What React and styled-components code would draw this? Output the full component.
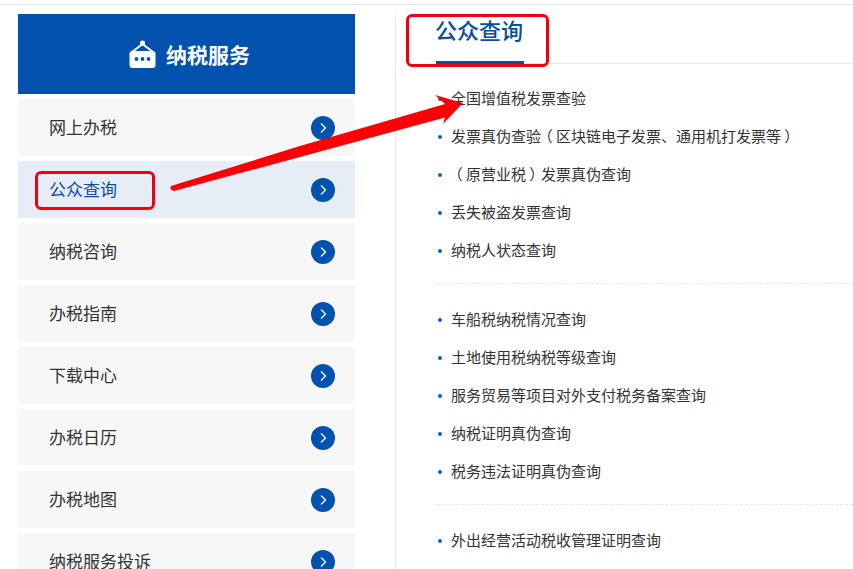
import React from "react";
import styled, { createGlobalStyle } from "styled-components";

const SIDE_ITEMS = ["网上办税", "公众查询", "纳税咨询", "办税指南", "下载中心", "办税日历", "办税地图", "纳税服务投诉"];

const GROUPS = [
  ["全国增值税发票查验", "发票真伪查验（区块链电子发票、通用机打发票等）", "（原营业税）发票真伪查询", "丢失被盗发票查询", "纳税人状态查询"],
  ["车船税纳税情况查询", "土地使用税纳税等级查询", "服务贸易等项目对外支付税务备案查询", "纳税证明真伪查询", "税务违法证明真伪查询"],
  ["外出经营活动税收管理证明查询"],
];

const Global = createGlobalStyle`
  html, body { margin: 0; padding: 0; background: #fff; }
  body { font-family: "Noto Sans CJK SC", "Liberation Sans", sans-serif; }
  ul { list-style: none; margin: 0; padding: 0; }
`;

const Page = styled.div`
  position: relative;
  width: 853px;
  height: 565px;
  margin-top: 4px;
  overflow: hidden;
  border-top: 1px solid #dcdfe3;
  padding: 9px 0 0 18px;
  box-sizing: border-box;
  display: flex;
  align-items: stretch;
`;

const Sidebar = styled.aside`
  width: 337px;
  flex: none;
`;

const SideHead = styled.div`
  height: 80px;
  background: #0151ae;
  display: flex;
  align-items: center;
  justify-content: center;
  gap: 10px;
  padding-left: 6px;
  color: #fff;
  font-size: 21px;
  font-weight: 700;
  margin-bottom: 5px;
`;

const SideRow = styled.div`
  height: 57px;
  margin-bottom: 5px;
  background: ${({ $active }) => ($active ? "#e6edf7" : "#f7f7f8")};
  color: ${({ $active }) => ($active ? "#0b4c9e" : "#333")};
  font-size: 17px;
  display: flex;
  align-items: center;
  justify-content: space-between;
  padding: 0 20px 0 31px;
`;

const SideLabel = styled.span`
  position: relative;
  top: -1px;
`;

const Arrow = styled.span`
  width: 24px;
  height: 24px;
  border-radius: 50%;
  background: #0151ae;
  display: flex;
  align-items: center;
  justify-content: center;
`;

const Main = styled.main`
  margin-left: 40px;
  flex: 1;
  border-left: 1px solid #e2e4e8;
  padding-left: 40px;
  min-width: 0;
`;

const TabBar = styled.div`
  height: 49px;
  border-bottom: 1px solid #e4e6e9;
  margin-bottom: 15px;
`;

const Tab = styled.div`
  width: 88px;
  height: 47px;
  border-bottom: 3px solid #0b4ea6;
  color: #0b4c9e;
  font-size: 22px;
  font-weight: 500;
  line-height: 30px;
  white-space: nowrap;
  text-indent: -1px;
`;

const Group = styled.ul`
  padding-bottom: 14px;
  margin-bottom: 16px;
  border-bottom: 1px dashed #e6e6e6;
  &:last-child { border-bottom: 0; }
`;

const Item = styled.li`
  position: relative;
  height: 38px;
  line-height: 38px;
  padding-left: 15px;
  font-size: 15px;
  color: #333;
  white-space: nowrap;
  &::before {
    content: "";
    position: absolute;
    left: 2px;
    top: 18px;
    width: 4px;
    height: 4px;
    border-radius: 50%;
    background: #0d62b8;
  }
`;

// full-width brackets sit centred in their cell in the original font
const Paren = styled.span`
  display: inline-block;
  width: 15px;
  text-align: center;
  font-feature-settings: "palt" 1;
`;

const RedBox = styled.div`
  position: absolute;
  left: ${({ $x }) => $x}px;
  top: ${({ $y }) => $y}px;
  width: ${({ $w }) => $w}px;
  height: ${({ $h }) => $h}px;
  border: 3px solid #f0000f;
  border-radius: 6px;
  box-sizing: border-box;
`;

const RedArrow = styled.svg`
  position: absolute;
  left: 0;
  top: -5px;
  pointer-events: none;
`;

function ServiceIcon() {
  return (
    <svg width="27" height="28" viewBox="0 0 27 28" fill="none">
      <circle cx="13.5" cy="3" r="2.6" fill="#fff" />
      <path d="M13.5 4 L3 12 H24 Z" stroke="#fff" strokeWidth="2" strokeLinejoin="round" fill="none" />
      <path d="M13.5 6.5 L5 13 H22 Z" fill="#0151ae" />
      <rect x="0.5" y="11" width="26" height="17" rx="3" fill="#fff" />
      <circle cx="7.5" cy="19" r="1.9" fill="#0151ae" />
      <circle cx="13.5" cy="19" r="1.9" fill="#0151ae" />
      <circle cx="19.5" cy="19" r="1.9" fill="#0151ae" />
    </svg>
  );
}

function Chevron() {
  return (
    <svg width="10" height="12" viewBox="0 0 10 12" fill="none">
      <path d="M3 1.5 L7.5 6 L3 10.5" stroke="#fff" strokeWidth="1.3" />
    </svg>
  );
}

function withParens(text) {
  return text.split(/([（）])/).map((part, i) =>
    part === "（" || part === "）" ? <Paren key={i}>{part}</Paren> : part
  );
}

export default function App() {
  return (
    <>
      <Global />
      <Page>
        <Sidebar>
          <SideHead>
            <ServiceIcon />
            纳税服务
          </SideHead>
          {SIDE_ITEMS.map((label) => (
            <SideRow key={label} $active={label === "公众查询"}>
              <SideLabel>{label}</SideLabel>
              <Arrow><Chevron /></Arrow>
            </SideRow>
          ))}
        </Sidebar>
        <Main>
          <TabBar>
            <Tab>公众查询</Tab>
          </TabBar>
          {GROUPS.map((items, i) => (
            <Group key={i}>
              {items.map((text) => (
                <Item key={text}>{withParens(text)}</Item>
              ))}
            </Group>
          ))}
        </Main>
        <RedBox $x={35} $y={166} $w={120} $h={39} />
        <RedBox $x={406} $y={9} $w={143} $h={53} />
        <RedArrow width="853" height="569" viewBox="0 0 853 569">
          <path
            d="M171 186 L300 146 L445 104 L435 95 L463 103 L443 124 L445 117.5 L300 157 L174 191 Q169 190 171 186 Z"
            fill="#fb0007"
          />
        </RedArrow>
      </Page>
    </>
  );
}
